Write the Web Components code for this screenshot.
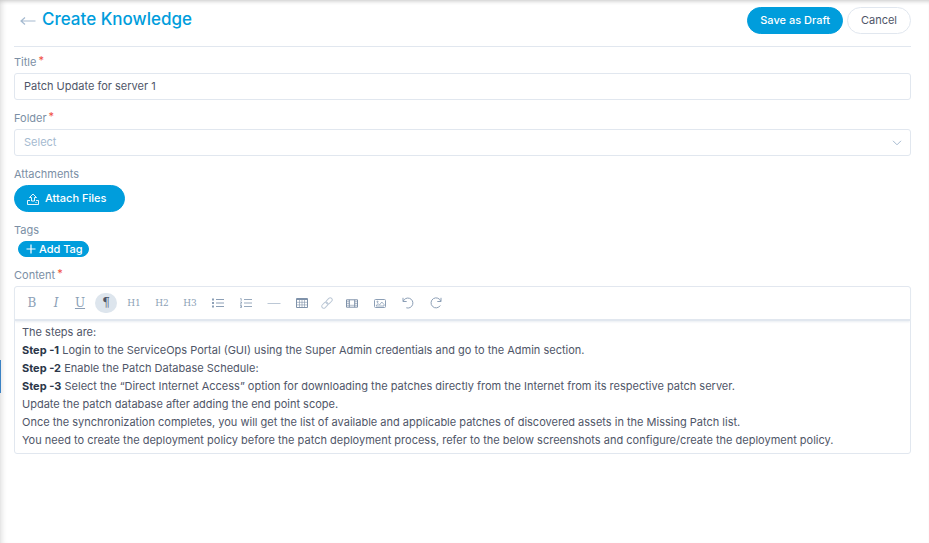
<!DOCTYPE html>
<html lang="en">
<head>
<meta charset="utf-8">
<meta name="viewport" content="width=device-width, initial-scale=1">
<title>Create Knowledge</title>
<style>
    :root {
        --primary: #009ddc;
        --text: #4f5668;
        --strong: #2b3648;
        --label: #7b8fa5;
        --muted: #a5bad0;
        --border: #e1e7ef;
        --danger: #f04e3e;
    }

    body {
        margin: 0;
        background: #fff;
        color: var(--text);
        font-family: Inter, "Open Sans", sans-serif;
        font-size: 11px;
        line-height: 18px;
    }

    b {
        color: var(--strong);
    }
</style>
</head>
<body>

<knowledge-page>
    <page-header slot="header" heading="Create Knowledge">
        <pill-button>Save as Draft</pill-button>
        <pill-button kind="plain">Cancel</pill-button>
    </page-header>
    <text-field label="Title" value="Patch Update for server 1" required></text-field>
    <select-field label="Folder" placeholder="Select" required></select-field>
    <form-group label="Attachments">
        <pill-button icon="upload">Attach Files</pill-button>
    </form-group>
    <form-group label="Tags">
        <pill-button kind="tag" icon="plus">Add Tag</pill-button>
    </form-group>
    <rich-editor label="Content" required>
        <p>The steps are:</p>
        <p><b>Step -1</b> Login to the ServiceOps Portal (GUI) using the Super Admin credentials and go to the Admin section.</p>
        <p><b>Step -2</b> Enable the Patch Database Schedule:</p>
        <p><b>Step -3</b> Select the “Direct Internet Access” option for downloading the patches directly from the Internet from its respective patch server.</p>
        <p>Update the patch database after adding the end point scope.</p>
        <p>Once the synchronization completes, you will get the list of available and applicable patches of discovered assets in the Missing Patch list.</p>
        <p>You need to create the deployment policy before the patch deployment process, refer to the below screenshots and configure/create the deployment policy.</p>
    </rich-editor>
</knowledge-page>

<script>
    const icons = {
        back: `<svg width="16" height="12" viewBox="0 0 16 12"><path d="M15.5 6H1M5 2.5 1 6l4 3.500" stroke-width="1.200"/></svg>`,
        upload: `<svg width="12" height="12" viewBox="0 0 12 12"><path d="M4.500 8V4.500H2.500L6 1l3.500 3.500H7.500V8zM3 7.500H.5v4h11v-4H9M8.500 9.500h1" stroke-width=".9"/></svg>`,
        plus: `<svg width="10" height="10" viewBox="0 0 10 10"><path d="M5 .5v9M.5 5h9" stroke-width="1.200"/></svg>`,
        chevron: `<svg width="10" height="6" viewBox="0 0 10 6"><path d="M1 .8 5 4.800 9 .8"/></svg>`,
        bullets: `<svg width="12" height="10" viewBox="0 0 12 10"><path d="M4 1.500h8M4 5h8M4 8.500h8"/><path d="M0 1.500h2M0 5h2M0 8.500h2" stroke-width="2"/></svg>`,
        numbers: `<svg width="12" height="10" viewBox="0 0 12 10"><path d="M4 1.500h8M4 5h8M4 8.500h8M.3.600h.900v2.200M.2 4h1.300v1L.3 6h1.400M.2 7.500h1.300v2H.2M.6 8.500h.9" stroke-width=".9"/></svg>`,
        rule: `<svg width="14" height="10" viewBox="0 0 14 10"><path d="M.5 5.500h13"/></svg>`,
        table: `<svg width="12" height="10" viewBox="0 0 12 10"><path d="M.5.5h11v9H.5zM.5 1.500h11"/><path d="M1 4.300h10M1 6.900h10M3.500 2v7.500M6 2v7.500M8.500 2v7.500" stroke-width=".6"/></svg>`,
        link: `<svg width="12" height="12" viewBox="0 0 12 12"><g transform="rotate(-45 6 6)"><rect x="-.5" y="4" width="7" height="4" rx="2"/><rect x="5.500" y="4" width="7" height="4" rx="2"/></g></svg>`,
        video: `<svg width="12" height="9" viewBox="0 0 12 9"><path d="M.5.8h11v7.400H.5zM3.300.8v7.400M8.700.8v7.400"/><path d="M.5 2.700h2.800M.5 4.500h2.800M.5 6.300h2.800M8.700 2.700h2.800M8.700 4.500h2.800M8.700 6.300h2.800M3.300 6.300h5.400" stroke-width=".6"/></svg>`,
        image: `<svg width="12" height="9" viewBox="0 0 12 9"><rect x=".5" y=".5" width="11" height="8" rx="1"/><path d="M2 7l2-2.500L5.500 6l2.300-3L10 5.500V7z" stroke-width=".8"/><circle cx="3.500" cy="2.800" r=".6"/></svg>`,
        undo: `<svg width="12" height="12" viewBox="0 0 12 12"><path d="M1 .8v3.700h3.700M1.200 4.300A5 5 0 1 1 4.300 10.800"/></svg>`,
        redo: `<svg width="12" height="12" viewBox="0 0 12 12"><path d="M11 .8v3.700H7.300M10.800 4.300A5 5 0 1 0 10.300 8.500"/></svg>`
    };

    const svgStyle = `
        svg {
            display: block;
            flex: none;
            fill: none;
            stroke: currentColor;
        }
    `;

    // shared by every labelled part of the form
    const labelStyle = `
        :host {
            display: block;
        }

        .label {
            display: block;
            height: 17px;
            margin-bottom: 3px;
            color: var(--label);
        }

        .label sup {
            margin-left: 2px;
            color: var(--danger);
            font-size: 11px;
            line-height: 12px;
            vertical-align: 2px;
        }
    `;

    const star = (el) => el.hasAttribute("required") ? `<sup>*</sup>` : "";

    class KnowledgePage extends HTMLElement {
        constructor() {
            super();
            this.attachShadow({ mode: "open" }).innerHTML = `
                <style>
                    :host {
                        display: block;
                        box-sizing: border-box;
                        position: relative;
                        min-height: 100vh;
                        padding: 0 18px 18px 14px;
                        box-shadow: inset 0 4px 4px -3px #c4c4c4, inset 6px 0 6px -5px #d8d8d8;
                    }

                    form {
                        display: grid;
                        gap: 9px;
                        padding-top: 6px;
                    }

                    .marker {
                        position: absolute;
                        left: 0;
                        top: 360px;
                        width: 1px;
                        height: 33px;
                        background: #3b82c4;
                    }
                </style>
                <slot name="header"></slot>
                <form><slot></slot></form>
                <div class="marker"></div>
            `;
        }
    }

    class PageHeader extends HTMLElement {
        connectedCallback() {
            this.attachShadow({ mode: "open" }).innerHTML = `
                <style>
                    ${svgStyle}
                    :host {
                        display: flex;
                        align-items: center;
                        gap: 6px;
                        padding: 7px 0 12px 6px;
                        border-bottom: 1px solid var(--border);
                    }

                    a {
                        color: var(--muted);
                    }

                    h1 {
                        flex: 1;
                        margin: 0;
                        color: var(--primary);
                        font-size: 17px;
                        font-weight: 500;
                        line-height: 25px;
                        padding-bottom: 2px;
                    }

                    .actions {
                        display: flex;
                        gap: 4px;
                    }
                </style>
                <a href="#" aria-label="Back">${icons.back}</a>
                <h1>${this.getAttribute("heading")}</h1>
                <div class="actions"><slot></slot></div>
            `;
        }
    }

    class PillButton extends HTMLElement {
        connectedCallback() {
            const kind = this.getAttribute("kind") || "primary";
            const icon = icons[this.getAttribute("icon")] || "";

            this.attachShadow({ mode: "open" }).innerHTML = `
                <style>
                    ${svgStyle}
                    :host {
                        display: block;
                    }

                    button {
                        display: flex;
                        align-items: center;
                        gap: 6px;
                        height: 27px;
                        padding: 0 12px;
                        border: 1px solid var(--primary);
                        border-radius: 14px;
                        background: var(--primary);
                        color: #fff;
                        font: inherit;
                        font-weight: 500;
                    }

                    span {
                        padding-bottom: 2px;
                    }

                    .icon {
                        padding-right: 18px;
                    }

                    .plain {
                        padding: 0 13px;
                        border-color: var(--border);
                        background: #fff;
                        color: var(--text);
                        font-weight: 400;
                    }

                    .tag {
                        gap: 3px;
                        height: 16px;
                        margin-left: 4px;
                        padding: 0 5px 0 7px;
                    }

                    .tag span {
                        padding: 0;
                    }
                </style>
                <button type="button" class="${icon ? "icon" : ""} ${kind}">${icon}<span><slot></slot></span></button>
            `;
        }
    }

    class TextField extends HTMLElement {
        connectedCallback() {
            this.attachShadow({ mode: "open" }).innerHTML = `
                <style>
                    ${labelStyle}
                    input {
                        display: block;
                        box-sizing: border-box;
                        width: 100%;
                        height: 27px;
                        padding: 0 9px 1px;
                        border: 1px solid var(--border);
                        border-radius: 3px;
                        background: #fff;
                        color: inherit;
                        font: inherit;
                    }
                </style>
                <label class="label" for="field">${this.getAttribute("label")}${star(this)}</label>
                <input id="field" type="text" value="${this.getAttribute("value")}">
            `;
        }
    }

    class SelectField extends HTMLElement {
        connectedCallback() {
            this.attachShadow({ mode: "open" }).innerHTML = `
                <style>
                    ${labelStyle}
                    ${svgStyle}
                    .box {
                        display: grid;
                        align-items: center;
                        color: var(--muted);
                    }

                    .box > * {
                        grid-area: 1 / 1;
                    }

                    select {
                        appearance: none;
                        width: 100%;
                        height: 27px;
                        padding: 0 9px 1px;
                        border: 1px solid var(--border);
                        border-radius: 3px;
                        background: #fff;
                        color: inherit;
                        font: inherit;
                    }

                    svg {
                        justify-self: end;
                        margin-right: 9px;
                        pointer-events: none;
                    }
                </style>
                <label class="label" for="field">${this.getAttribute("label")}${star(this)}</label>
                <div class="box">
                    <select id="field"><option value="">${this.getAttribute("placeholder")}</option></select>
                    ${icons.chevron}
                </div>
            `;
        }
    }

    class FormGroup extends HTMLElement {
        connectedCallback() {
            this.attachShadow({ mode: "open" }).innerHTML = `
                <style>${labelStyle}</style>
                <div role="group" aria-labelledby="name">
                    <span class="label" id="name">${this.getAttribute("label")}</span>
                    <slot></slot>
                </div>
            `;
        }
    }

    class RichEditor extends HTMLElement {
        connectedCallback() {
            const tools = [
                ["Bold", "B", "mark"],
                ["Italic", "<i>I</i>", "mark"],
                ["Underline", "<u>U</u>", "mark"],
                ["Paragraph", "<span>¶</span>", "active"],
                ["Heading 1", "H1", "head"],
                ["Heading 2", "H2", "head"],
                ["Heading 3", "H3", "head"],
                ["Bullet list", icons.bullets, ""],
                ["Ordered list", icons.numbers, ""],
                ["Horizontal rule", icons.rule, "rule"],
                ["Table", icons.table, "strong"],
                ["Link", icons.link, "link"],
                ["Video", icons.video, "strong"],
                ["Image", icons.image, ""],
                ["Undo", icons.undo, ""],
                ["Redo", icons.redo, ""]
            ];

            this.attachShadow({ mode: "open" }).innerHTML = `
                <style>
                    ${labelStyle}
                    ${svgStyle}
                    .editor {
                        border: 1px solid var(--border);
                        border-radius: 3px;
                    }

                    .toolbar {
                        display: flex;
                        flex-wrap: wrap;
                        align-items: center;
                        padding: 6px 5px;
                        border-bottom: 2px solid var(--border);
                        box-shadow: 0 1px 2px #e9edf2;
                    }

                    .toolbar button {
                        display: flex;
                        align-items: center;
                        justify-content: center;
                        width: 28px;
                        height: 20px;
                        padding: 0;
                        border: 0;
                        background: none;
                        color: #8c9fb6;
                        font: 9px/20px "DejaVu Serif", serif;
                    }

                    .toolbar .mark {
                        width: 24px;
                        font-size: 12px;
                    }

                    .toolbar .active {
                        color: var(--text);
                        font-size: 12px;
                    }

                    .active span {
                        width: 22px;
                        border-radius: 10px;
                        background: #dde5ed;
                    }

                    .toolbar .strong {
                        color: #7f92aa;
                    }

                    .toolbar .rule,
                    .toolbar .link {
                        color: #bcc8d6;
                    }

                    .toolbar .link {
                        width: 22px;
                    }

                    .content {
                        padding: 2px 7px 4px;
                        outline: none;
                    }

                    ::slotted(p) {
                        margin: 0;
                    }
                </style>
                <span class="label" id="name">${this.getAttribute("label")}${star(this)}</span>
                <div class="editor">
                    <div class="toolbar" role="toolbar">
                        ${tools.map(([name, face, kind]) => `<button type="button" class="${kind}" aria-label="${name}">${face}</button>`).join("")}
                    </div>
                    <div class="content" role="textbox" aria-multiline="true" aria-labelledby="name" contenteditable="true"><slot></slot></div>
                </div>
            `;
        }
    }

    customElements.define("knowledge-page", KnowledgePage);
    customElements.define("page-header", PageHeader);
    customElements.define("pill-button", PillButton);
    customElements.define("text-field", TextField);
    customElements.define("select-field", SelectField);
    customElements.define("form-group", FormGroup);
    customElements.define("rich-editor", RichEditor);
</script>
</body>
</html>
